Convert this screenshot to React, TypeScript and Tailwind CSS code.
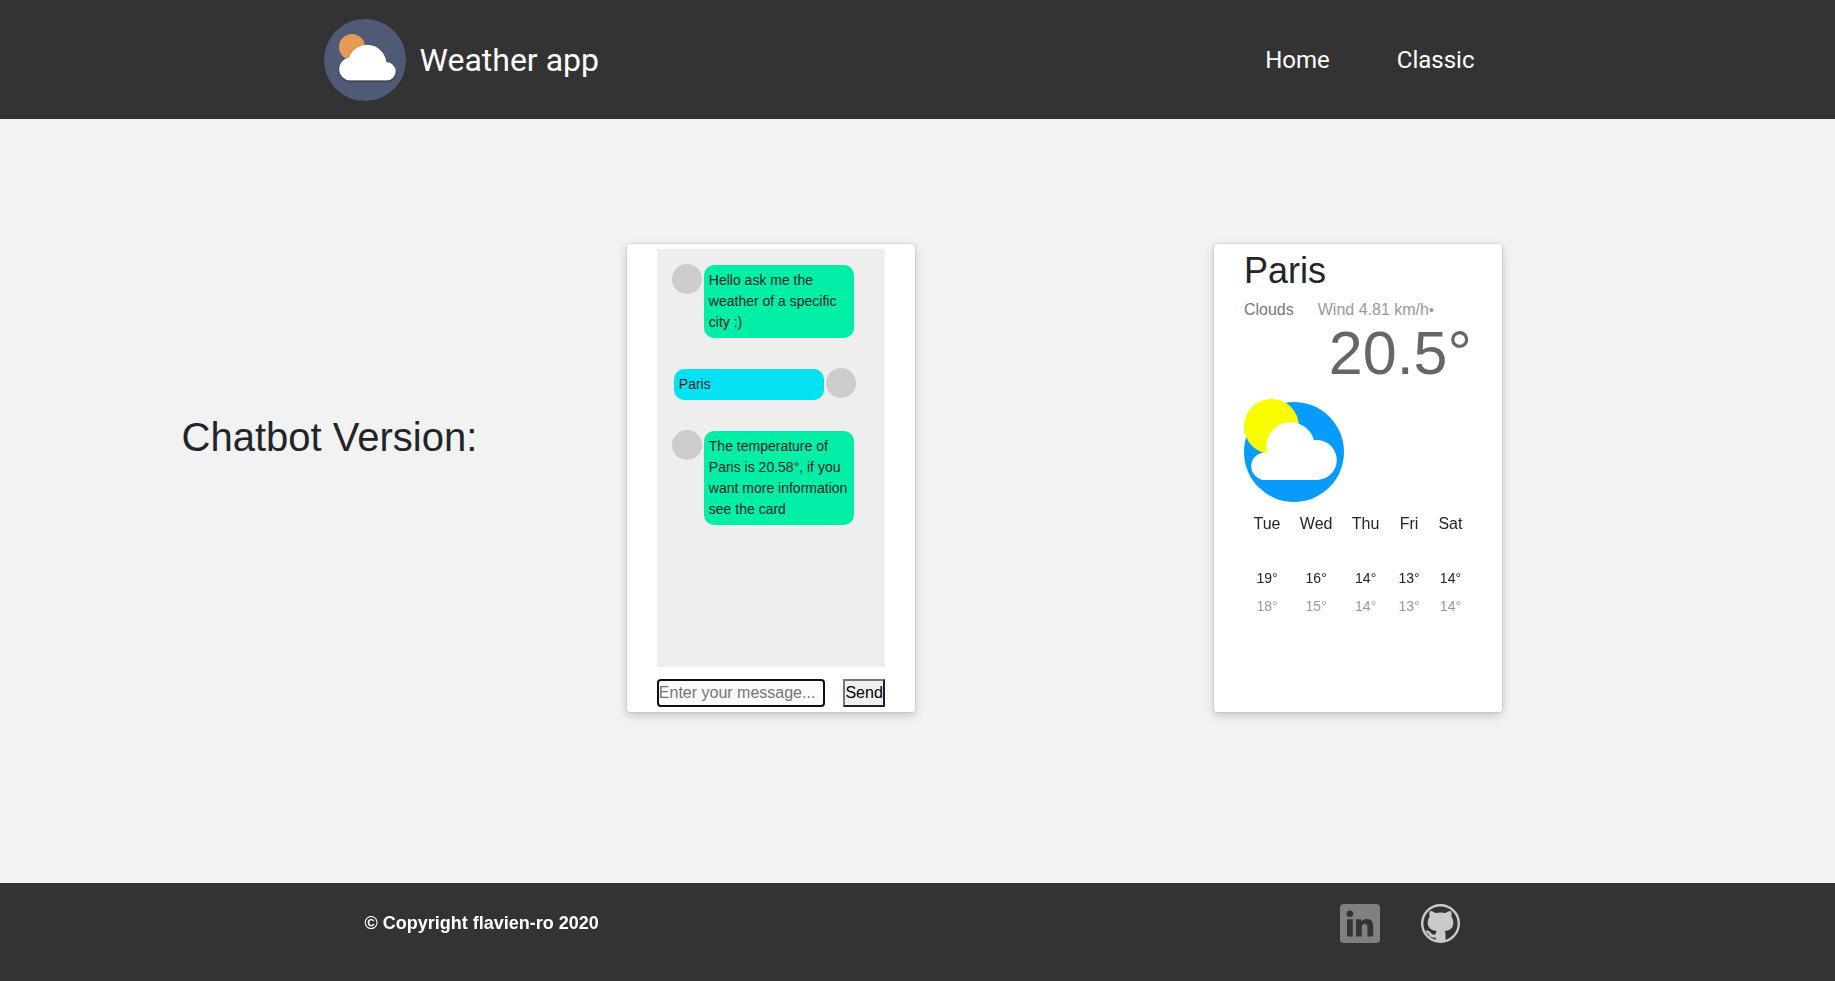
import React from "react";

type Message = { from: "bot" | "user"; text: string };

const messages: Message[] = [
  { from: "bot", text: "Hello ask me the weather of a specific city :)" },
  { from: "user", text: "Paris" },
  {
    from: "bot",
    text: "The temperature of Paris is 20.58°, if you want more information see the card",
  },
];

const forecast = [
  { day: "Tue", high: 19, low: 18 },
  { day: "Wed", high: 16, low: 15 },
  { day: "Thu", high: 14, low: 14 },
  { day: "Fri", high: 13, low: 13 },
  { day: "Sat", high: 14, low: 14 },
];

function Logo() {
  return (
    <svg viewBox="0 0 82 82" className="size-[82px]" aria-hidden="true">
      <defs>
        <filter id="cloud-shadow" x="-20%" y="-20%" width="140%" height="150%">
          <feDropShadow dx="0" dy="1" stdDeviation="1" floodColor="#000" floodOpacity="0.5" />
        </filter>
      </defs>
      <circle cx="41" cy="41" r="41" fill="#505a76" />
      <circle cx="28" cy="28" r="13" fill="#e59b54" />
      <path
        d="M26.3 61.3A11.3 11.3 0 0 1 25 38.8A19.2 19.2 0 0 1 62.3 43.3A9 9 0 0 1 63 61.3Z"
        fill="#fff"
        filter="url(#cloud-shadow)"
      />
    </svg>
  );
}

function CloudyIcon() {
  return (
    <svg viewBox="0 0 100 103" className="h-[103px] w-[100px]" role="img" aria-label="Clouds">
      <circle cx="50" cy="53" r="50" fill="#079cfb" />
      <circle cx="27.5" cy="27.5" r="27.5" fill="#f9fb00" />
      <path
        d="M22 81A13.8 13.8 0 1 1 23.2 53.6A24.2 24.2 0 0 1 70 41.200A20 20 0 1 1 72 81Z"
        fill="#fff"
      />
    </svg>
  );
}

function LinkedInIcon() {
  return (
    <svg viewBox="0 0 40 39" className="h-[39px] w-10" aria-hidden="true">
      <rect width="40" height="39" rx="4" fill="#808080" />
      <circle cx="9.9" cy="9.8" r="3.300" fill="#333" />
      <path
        d="M7 15.300h5.800V32.500H7ZM16 15.300h5.400v2.400c1-1.700 2.900-2.800 5.400-2.800 5 0 6.400 3.200 6.400 8v9.600h-5.700v-8.600c0-2.300-.4-4.100-2.700-4.100s-3 1.700-3 4v8.700H16Z"
        fill="#333"
      />
    </svg>
  );
}

function GitHubIcon() {
  return (
    <svg viewBox="0 0 39 39" className="size-[39px]" aria-hidden="true">
      <circle cx="19.5" cy="19.5" r="18.3" fill="none" stroke="#c9cacc" strokeWidth="2.4" />
      <path
        d="M9 7c2 0 3.900.8 5.400 2 3.300-.7 6.900-.7 10.200 0C26.100 7.800 28 7 30 7c.8 2 .8 4 .3 5.500 1.400 1.700 2 3.600 2 6 0 6-3.500 8-8.800 8.600.7.900 1 2 1 3.400V38H14.700v-4.600c-3 .6-5 .1-6.300-1.800-1-1.500-1.600-2.600-3.300-3.400l-.4-1.600c2.800-.3 4.300 1.200 5.400 2.700 1.100 1.400 2.600 1.500 4.600.9.100-1.500.4-2.300 1.200-3.200C10.500 26.400 6.700 24.200 6.700 18.500c0-2.400.8-4.300 2.100-6C8.200 10.800 8.200 9 9 7Z"
        fill="#c9cacc"
      />
    </svg>
  );
}

function Card({ children }: { children: React.ReactNode }) {
  return (
    <section className="flex h-[468px] w-72 flex-col rounded-[3px] bg-white px-[30px] py-[5px] shadow-[0_3px_10px_rgba(0,0,0,0.2),0_0_0_1px_rgba(0,0,0,0.06)]">
      {children}
    </section>
  );
}

function ChatMessage({ message }: { message: Message }) {
  const fromUser = message.from === "user";
  return (
    <li className={fromUser ? "flex flex-row-reverse gap-0.5" : "flex gap-0.5"}>
      <span className="size-[30px] shrink-0 rounded-full bg-[#ccc]" />
      <p
        className={
          fromUser
            ? "mt-px w-[150px] rounded-[10px] bg-[#03e1f3] p-[5px]"
            : "mt-px w-[150px] rounded-[10px] bg-[#00eea5] p-[5px]"
        }
      >
        {message.text}
      </p>
    </li>
  );
}

export default function App() {
  return (
    <div className="flex min-h-screen flex-col bg-[#f2f2f2] font-['Liberation_Sans',Arial,sans-serif] text-base text-[#212529]">
      <header className="bg-[#333]">
        <div className="mx-auto flex h-[119px] w-full max-w-[1188px] items-center justify-between pr-[37px] font-[Roboto,sans-serif] text-white">
          <a href="#home" className="flex items-center gap-3.5 text-[32px]">
            <Logo />
            Weather app
          </a>
          <nav className="flex gap-[67px] text-2xl">
            <a href="#home">Home</a>
            <a href="#classic">Classic</a>
          </nav>
        </div>
      </header>

      <main className="mx-auto flex w-full max-w-[1472px] grow items-center pr-0.5 pb-[46px]">
        <h1 className="pb-[82px] text-[40px] leading-12">Chatbot Version:</h1>
        <div className="flex grow justify-around">
          <Card>
            <ul className="flex grow flex-col gap-[30px] bg-[#eee] py-[15px] pr-[29px] pl-[15px] text-sm leading-[21px]">
              {messages.map((message) => (
                <ChatMessage key={message.text} message={message} />
              ))}
            </ul>
            <form className="mt-3 flex h-7 justify-between" onSubmit={(e) => e.preventDefault()}>
              <input
                type="text"
                autoFocus
                aria-label="Message"
                placeholder="Enter your message..."
                className="w-[168px] rounded-[4px] border-2 border-[#101010] bg-[#fbfbfb] outline-none placeholder:text-[#757575]"
              />
              <button
                type="submit"
                className="border-2 border-t-[#767676] border-r-[#212121] border-b-[#212121] border-l-[#767676] bg-[#efefef] text-black"
              >
                Send
              </button>
            </form>
          </Card>

          <Card>
            <h2 className="text-4xl leading-[44px]">Paris</h2>
            <p className="mt-[5px] flex gap-6 leading-6 text-[#999]">
              <span className="text-[#777]">Clouds</span>
              <span>
                Wind 4.81 km/h<span className="text-sm">•</span>
              </span>
            </p>
            <p className="text-right text-[61px] leading-[62px] text-[#666]">20.5°</p>
            <div className="mt-[15px]">
              <CloudyIcon />
            </div>
            <table className="mt-2 w-full text-center">
              <thead>
                <tr>
                  {forecast.map((f) => (
                    <th key={f.day} className="h-7 px-2 py-0 font-normal">
                      {f.day}
                    </th>
                  ))}
                </tr>
              </thead>
              <tbody className="text-sm">
                <tr>
                  {forecast.map((f) => (
                    <td key={f.day} className="h-[54px] px-2 pt-[26px] pb-0">
                      {f.high}°
                    </td>
                  ))}
                </tr>
                <tr className="text-[#999]">
                  {forecast.map((f) => (
                    <td key={f.day} className="h-7 px-2 py-0">
                      {f.low}°
                    </td>
                  ))}
                </tr>
              </tbody>
            </table>
          </Card>
        </div>
      </main>

      <footer className="bg-[#333]">
        <div className="mx-auto flex h-[98px] w-full max-w-[1106px] items-start justify-between pt-[21px] pr-[11px] text-white">
          <p className="text-lg leading-[38px] font-bold">© Copyright flavien-ro 2020</p>
          <div className="flex gap-[41px]">
            <a href="#linkedin" aria-label="LinkedIn">
              <LinkedInIcon />
            </a>
            <a href="#github" aria-label="GitHub">
              <GitHubIcon />
            </a>
          </div>
        </div>
      </footer>
    </div>
  );
}
